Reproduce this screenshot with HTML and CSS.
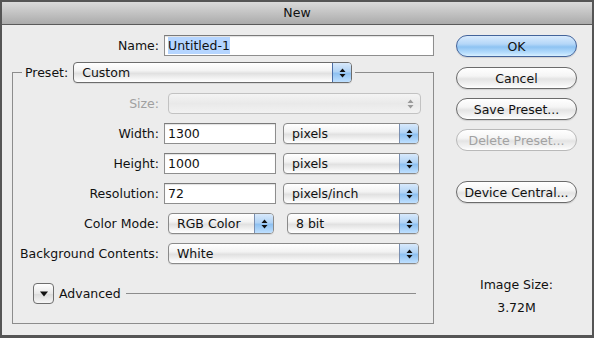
FILE: index.html
```html
<!DOCTYPE html>
<html>
<head>
<meta charset="utf-8">
<link rel="stylesheet" href="styles.css">
</head>
<body>
<div class="window">
  <div class="titlebar">New</div>
  <div class="content">
    <div class="left">
      <div class="name-row">
        <label class="name-label">Name:</label>
        <div class="textfield name-field"><span class="sel">Untitled-1</span></div>
      </div>
      <fieldset class="group">
        <legend class="legend">
          <span class="legend-label">Preset:</span>
          <div class="popup preset-popup"><span class="popup-text">Custom</span><span class="stepper"><svg width="7" height="12" viewBox="0 0 7 12"><path d="M3.5 1.5 L6.5 5 H0.5 Z M0.5 7 H6.5 L3.5 10.5 Z" fill="#111"/></svg></span></div>
        </legend>
        <div class="rows">
          <div class="row">
            <span class="label disabled">Size:</span>
            <div class="popup disabled-popup w-size"><span class="popup-text"></span><span class="stepper plain"><svg width="7" height="12" viewBox="0 0 7 12"><path d="M3.5 1.5 L6.5 5 H0.5 Z M0.5 7 H6.5 L3.5 10.5 Z" fill="#9a9a9a"/></svg></span></div>
          </div>
          <div class="row">
            <span class="label">Width:</span>
            <div class="textfield num-field">1300</div>
            <div class="popup unit-popup"><span class="popup-text">pixels</span><span class="stepper"><svg width="7" height="12" viewBox="0 0 7 12"><path d="M3.5 1.5 L6.5 5 H0.5 Z M0.5 7 H6.5 L3.5 10.5 Z" fill="#111"/></svg></span></div>
          </div>
          <div class="row">
            <span class="label">Height:</span>
            <div class="textfield num-field">1000</div>
            <div class="popup unit-popup"><span class="popup-text">pixels</span><span class="stepper"><svg width="7" height="12" viewBox="0 0 7 12"><path d="M3.5 1.5 L6.5 5 H0.5 Z M0.5 7 H6.5 L3.5 10.5 Z" fill="#111"/></svg></span></div>
          </div>
          <div class="row">
            <span class="label">Resolution:</span>
            <div class="textfield num-field">72</div>
            <div class="popup unit-popup"><span class="popup-text">pixels/inch</span><span class="stepper"><svg width="7" height="12" viewBox="0 0 7 12"><path d="M3.5 1.5 L6.5 5 H0.5 Z M0.5 7 H6.5 L3.5 10.5 Z" fill="#111"/></svg></span></div>
          </div>
          <div class="row">
            <span class="label">Color Mode:</span>
            <div class="popup mode-popup"><span class="popup-text">RGB Color</span><span class="stepper"><svg width="7" height="12" viewBox="0 0 7 12"><path d="M3.5 1.5 L6.5 5 H0.5 Z M0.5 7 H6.5 L3.5 10.5 Z" fill="#111"/></svg></span></div>
            <div class="popup bit-popup"><span class="popup-text">8 bit</span><span class="stepper"><svg width="7" height="12" viewBox="0 0 7 12"><path d="M3.5 1.5 L6.5 5 H0.5 Z M0.5 7 H6.5 L3.5 10.5 Z" fill="#111"/></svg></span></div>
          </div>
          <div class="row">
            <span class="label">Background Contents:</span>
            <div class="popup bg-popup"><span class="popup-text">White</span><span class="stepper"><svg width="7" height="12" viewBox="0 0 7 12"><path d="M3.5 1.5 L6.5 5 H0.5 Z M0.5 7 H6.5 L3.5 10.5 Z" fill="#111"/></svg></span></div>
          </div>
        </div>
        <div class="advanced">
          <span class="disclosure"><svg width="10" height="8" viewBox="0 0 10 8"><path d="M1 1.5 H9 L5 6.5 Z" fill="#111"/></svg></span>
          <span class="adv-text">Advanced</span>
          <span class="adv-line"></span>
        </div>
      </fieldset>
    </div>
    <div class="right">
      <button class="btn default">OK</button>
      <button class="btn">Cancel</button>
      <button class="btn">Save Preset...</button>
      <button class="btn disabled-btn">Delete Preset...</button>
      <button class="btn device">Device Central...</button>
      <div class="size-label">Image Size:</div>
      <div class="size-value">3.72M</div>
    </div>
  </div>
</div>
</body>
</html>
```
FILE: styles.css
```css
* { box-sizing: border-box; }
html, body { margin: 0; padding: 0; }
body {
  width: 594px;
  height: 338px;
  background: #3a3a3a;
  font-family: "DejaVu Sans", "Liberation Sans", sans-serif;
  font-size: 12.5px;
  color: #111;
  overflow: hidden;
}
.window {
  width: 594px;
  height: 338px;
  border: 2px solid #555;
  border-bottom-width: 3px;
  background: #ececec;
  display: flex;
  flex-direction: column;
}
.titlebar {
  height: 23px;
  border-bottom: 1px solid #5a5a5a;
  background: linear-gradient(#dadada, #ababab);
  text-align: center;
  line-height: 22px;
  font-size: 12.5px;
  color: #111;
}
.content {
  display: flex;
  flex: 1;
}
.left {
  width: 432px;
}
.name-row {
  display: flex;
  align-items: center;
  margin-top: 10px;
}
.name-label {
  width: 157px;
  text-align: right;
  margin-right: 5px;
}
.textfield {
  height: 21px;
  background: #fff;
  border: 1px solid #8e8e8e;
  border-top-color: #7a7a7a;
  box-shadow: inset 0 1px 1px rgba(0,0,0,0.12);
  padding: 0 0 0 3px;
  line-height: 19px;
  font-size: 12.5px;
}
.name-field {
  width: 270px;
}
.sel {
  background: #b5d5ff;
  padding: 1px 0;
}
.group {
  margin: 6px 0 0 10px;
  width: 422px;
  height: 262px;
  border: 1px solid #8c8c8c;
  padding: 0;
}
.legend {
  margin-left: 9px;
  padding: 0 3px;
  display: flex;
  align-items: center;
}
.legend-label {
  margin-right: 5px;
}
.popup {
  height: 21px;
  border: 1px solid #8a8a8a;
  border-radius: 4px;
  background: linear-gradient(#ffffff 0%, #f3f3f3 40%, #e1e1e1 55%, #f6f6f6 85%, #ffffff 100%);
  display: flex;
  box-shadow: 0 1px 0 rgba(0,0,0,0.08);
  overflow: hidden;
}
.popup-text {
  flex: 1;
  padding-left: 8px;
  line-height: 19px;
  font-size: 12.5px;
  white-space: nowrap;
}
.stepper {
  width: 19px;
  display: flex;
  align-items: center;
  justify-content: center;
  background: linear-gradient(#d8e9fb 0%, #b1d3f5 45%, #8fc1f1 55%, #bfe0ff 100%);
  border-left: 1px solid #7a8fb0;
}
.stepper.plain {
  background: transparent;
  border-left: none;
}
.preset-popup { width: 279px; border-color: #6c6c6c; }
.preset-popup .stepper { border-left-color: #4a6da6; }
.rows {
  display: flex;
  flex-direction: column;
  gap: 9px;
  margin-top: 10px;
}
.row {
  display: flex;
  align-items: center;
  height: 21px;
}
.label {
  width: 146px;
  text-align: right;
  margin-right: 5px;
  white-space: nowrap;
}
.label.disabled { color: #a0a0a0; }
.disabled-popup {
  border-color: #c2c2c2;
  background: linear-gradient(#f4f4f4, #e9e9e9 50%, #f2f2f2);
  box-shadow: none;
}
.w-size { width: 253px; margin-left: 4px; }
.num-field { width: 112px; }
.unit-popup { width: 136px; margin-left: 7px; }
.mode-popup { width: 106px; margin-left: 4px; }
.bit-popup { width: 132px; margin-left: 13px; }
.bg-popup { width: 251px; margin-left: 4px; }
.advanced {
  display: flex;
  align-items: center;
  margin: 19px 0 0 20px;
}
.disclosure {
  width: 21px;
  height: 21px;
  border: 1px solid #6e6e6e;
  border-radius: 4px;
  background: linear-gradient(#ffffff, #e8e8e8 50%, #dcdcdc 55%, #f6f6f6);
  display: flex;
  align-items: center;
  justify-content: center;
}
.adv-text {
  margin-left: 5px;
  font-size: 12.5px;
}
.adv-line {
  margin-left: 5px;
  width: 290px;
  height: 1px;
  background: #8c8c8c;
}
.right {
  margin-left: 22px;
  width: 121px;
  display: flex;
  flex-direction: column;
  padding-top: 10px;
}
.btn {
  height: 22px;
  width: 121px;
  border: 1px solid #6b6b6b;
  border-radius: 11px;
  background: linear-gradient(#ffffff 0%, #f5f5f5 40%, #e4e4e4 55%, #f4f4f4 85%, #ffffff 100%);
  font-family: "DejaVu Sans", "Liberation Sans", sans-serif;
  font-size: 12.5px;
  color: #111;
  padding: 0;
  margin: 0 0 9px 0;
  box-shadow: 0 1px 1px rgba(0,0,0,0.12);
}
.btn.default {
  border-color: #44649b;
  background: linear-gradient(#d9ebfd 0%, #b5d7f8 40%, #8ec3f2 55%, #b8defd 85%, #d8f0ff 100%);
  margin-bottom: 10px;
}
.btn.disabled-btn {
  color: #a2a2a2;
  border-color: #b9b9b9;
  box-shadow: none;
}
.btn.device {
  margin-top: 21px;
}
.size-label {
  margin-top: 65px;
  text-align: center;
  line-height: 15px;
}
.size-value {
  margin-top: 8px;
  text-align: center;
  line-height: 15px;
}
```
